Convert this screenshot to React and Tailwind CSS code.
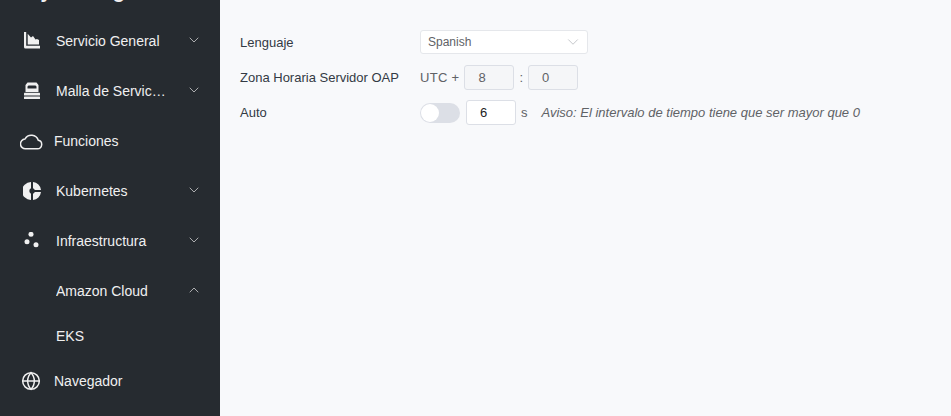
import React from 'react';
import { ChevronDown, ChevronUp, Globe } from 'lucide-react';

const ChartIcon = () => (
  <svg width="18" height="18" viewBox="0 0 18 18" fill="#f0f0f0">
    <path d="M1 0h2.200v13.800H17V16.500H2.500A1.500 1.500 0 0 1 1 15z" />
    <path d="M4.700 12.500V1.800l3.300 3.700 2-1.500 2.500 3.500 1.500-.5 2 1v4.500z" />
  </svg>
);

const MeshIcon = () => (
  <svg width="18" height="18" viewBox="0 0 18 18" fill="#f0f0f0">
    <path fillRule="evenodd" d="M4.500 0.500h9L15.500 3V10H2.500V3zM5.500 3.500 4.500 4.500V6.500h9V4.500L12.500 3.500z" />
    <rect x="1" y="10.800" width="16" height="2.600" rx="0.500" />
    <rect x="1" y="14.400" width="16" height="2.600" rx="0.500" />
  </svg>
);

const CloudIcon = () => (
  <svg width="23" height="17" viewBox="0 0 23 17" fill="none" stroke="#f0f0f0" strokeWidth="1.500">
    <path d="M5.800 15.800h11.500a4.300 4.300 0 0 0 1-8.500A7.300 7.300 0 0 0 5 6a4.900 4.900 0 0 0 .8 9.800z" />
  </svg>
);

const PieIcon = () => (
  <svg width="18" height="18" viewBox="0 0 18 18" fill="#f0f0f0">
    <path d="M8 0v6.300a3 3 0 0 0 0 5.400V18A9 9 0 0 1 8 0z" />
    <path d="M10 0a9 9 0 0 1 8 8h-6.200A3 3 0 0 0 10 6.300z" />
    <path d="M11.800 10H18a9 9 0 0 1-8 8v-6.300a3 3 0 0 0 1.800-1.700z" />
  </svg>
);

const DotsIcon = () => (
  <svg width="18" height="18" viewBox="0 0 18 18" fill="#f0f0f0">
    <circle cx="8" cy="2.300" r="2.500" />
    <circle cx="4" cy="9.800" r="2.500" />
    <circle cx="13" cy="12.800" r="2.500" />
  </svg>
);

const menu = [
  { label: 'Servicio General', icon: <ChartIcon />, arrow: 'down' },
  { label: 'Malla de Servicios', icon: <MeshIcon />, arrow: 'down' },
  { label: 'Funciones', icon: <CloudIcon />, plain: true },
  { label: 'Kubernetes', icon: <PieIcon />, arrow: 'down' },
  { label: 'Infraestructura', icon: <DotsIcon />, arrow: 'down' },
  { label: 'Amazon Cloud', arrow: 'up' },
];

function MenuItem({ item }) {
  return (
    <div className="flex h-[50px] items-center text-[14px] text-[#f0f0f0]">
      <div className={item.plain ? 'flex w-[54px] shrink-0 pl-[20px]' : 'flex w-[56px] shrink-0 pl-[23px]'}>{item.icon}</div>
      <span className="w-[110px] truncate">{item.label}</span>
      {item.arrow === 'down' && <ChevronDown size={16} strokeWidth={1.1} className="mt-[-3px] ml-[20px] text-[#dddddd]" />}
      {item.arrow === 'up' && <ChevronUp size={16} strokeWidth={1.1} className="mt-[-3px] ml-[20px] text-[#dddddd]" />}
    </div>
  );
}

function App() {
  return (
    <div className="flex h-[416px] w-[951px] overflow-hidden bg-[#f8f9fb] font-['Liberation_Sans',sans-serif]">
      <aside className="flex w-[220px] shrink-0 flex-col bg-[#262b30]">
        <div className="h-[16px] overflow-hidden">
          <div className="mt-[-21px] pl-[16px] text-[20px] leading-[24px] font-bold text-[#f0f0f0]">Skywalking</div>
        </div>
        {menu.map((item) => (
          <MenuItem key={item.label} item={item} />
        ))}
        <div className="flex h-[40px] items-center pl-[56px] text-[14px] text-[#f0f0f0]">EKS</div>
        <div className="flex h-[50px] items-center text-[14px] text-[#f0f0f0]">
          <div className="flex w-[54px] shrink-0 pl-[21px]"><Globe size={20} strokeWidth={1.8} /></div>
          <span>Navegador</span>
        </div>
      </aside>
      <main className="flex flex-col gap-[5px] pt-[27px] pl-[20px] text-[13px] text-[#333a44]">
        <div className="flex h-[30px] items-center pt-[1px]">
          <span className="w-[180px]">Lenguaje</span>
          <div className="mt-[-1px] flex h-[24px] w-[168px] items-center justify-between rounded-[3px] border border-[#e5e7eb] bg-white pr-[5px] pl-[7px] text-[12px] text-[#606266]">
            Spanish
            <ChevronDown size={18} strokeWidth={0.9} className="text-[#a8abb2]" />
          </div>
        </div>
        <div className="flex h-[30px] items-center pt-[1px]">
          <span className="w-[180px]">Zona Horaria Servidor OAP</span>
          <span className="tracking-[0.3px] text-[#606266]">UTC +</span>
          <div className="ml-[5px] flex h-[25px] w-[50px] items-center rounded-[3px] border border-[#dcdfe6] bg-[#f5f6f8] pl-[13px] text-[13px] text-[#606266]">8</div>
          <span className="mx-[5px] text-[#606266]">:</span>
          <div className="flex h-[25px] w-[50px] items-center rounded-[3px] border border-[#dcdfe6] bg-[#f5f6f8] pl-[13px] text-[13px] text-[#606266]">0</div>
        </div>
        <div className="flex h-[30px] items-center pt-[1px]">
          <span className="w-[180px]">Auto</span>
          <div className="flex h-[20px] w-[40px] items-center rounded-full bg-[#dcdfe6] pl-[1px]">
            <div className="size-[18px] rounded-full bg-white" />
          </div>
          <div className="ml-[6px] flex h-[25px] w-[50px] items-center rounded-[3px] border border-[#dcdfe6] bg-white pl-[13px] text-[13px] text-[#222222]">6</div>
          <span className="ml-[5px] text-[#606266]">s</span>
          <span className="ml-[14px] text-[13px] text-[#606266] italic">Aviso: El intervalo de tiempo tiene que ser mayor que 0</span>
        </div>
      </main>
    </div>
  );
}

export default App;
